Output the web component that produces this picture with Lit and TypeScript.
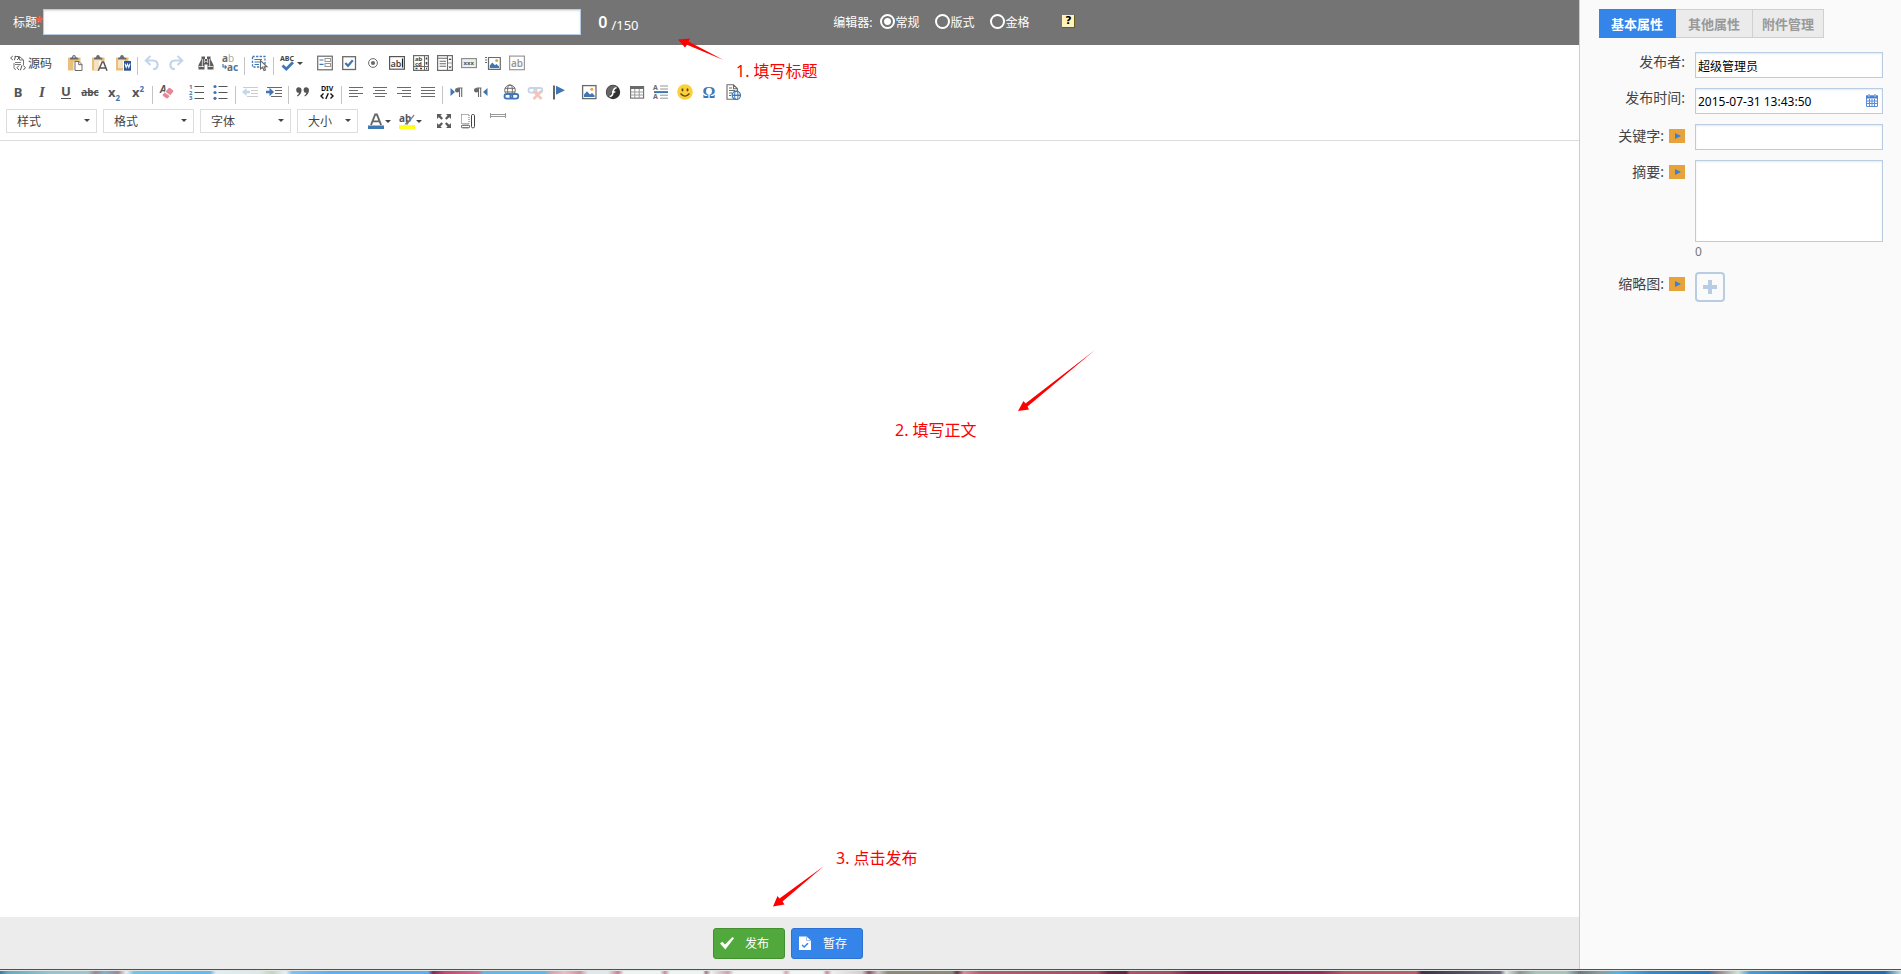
import { LitElement, html, svg, css, TemplateResult, SVGTemplateResult } from "lit";
import { customElement, state } from "lit/decorators.js";

const G = "#6a6a6a";
const B = "#3f77b5";

const icon = (body: SVGTemplateResult, w = 16, h = 16) =>
  html`<svg width=${w} height=${h} viewBox="0 0 ${w} ${h}" aria-hidden="true">${body}</svg>`;

const lines = (xs: [number, number][], c = G) =>
  svg`${xs.map(([a, b], i) => svg`<path d="M${a} ${3.5 + i * 3}H${b}" stroke=${c} fill="none"/>`)}`;

const clipboard = svg`
  <path d="M1 2.5H13.5V7H6.5V15.5H1Z" fill="#e9bf7c"/>
  <path d="M3 4.5V3L5 2.2Q5.3 0 7 0T9 2.2L11.3 3V4.5Z" fill=${G}/>
  <circle cx="7" cy="2" r=".8" fill="#fff"/>`;

const chain = (c: string) => svg`
  <rect x="1.5" y="10" width="8" height="4.6" rx="2.3" fill="none" stroke=${c} stroke-width="1.8"/>
  <rect x="7.3" y="10" width="8" height="4.6" rx="2.3" fill="none" stroke=${c} stroke-width="1.8"/>`;

const para = svg`<path d="M8.5 4H13.5M8.8 4.2V8M10.5 4V13M12.7 4V13" stroke=${G} stroke-width="1.1" fill="none"/>
  <circle cx="8.2" cy="6.2" r="2.2" fill=${G}/>`;

const ICONS: Record<string, TemplateResult> = {
  source: icon(svg`<path d="M4.5 1.5H9.5L13.5 5V10M9.5 1.5V5H13.5M5 7.5H11M5 9.5H11M4 8V12.5Q4 14.5 6 14.5" fill="none" stroke="#777"/>
    <path d="M2.8 1L.6 3L2.8 5M7 1L9 3L7 5M5.6 .8L4.4 5.2" fill="none" stroke="#555"/>
    <path d="M9 10.5L7 12.7L9 15M13.4 10.5L15.4 12.7L13.4 15M12 10.3L10.4 15.3" fill="none" stroke="#555"/>`),
  paste: icon(svg`${clipboard}<path d="M8 6.5H12L15 9.5V15.5H8Z" fill="#fff" stroke=${G}/><path d="M11.7 6.5V9.7H15" fill="none" stroke=${G}/>`),
  pasteText: icon(svg`<path d="M1 2.5H13.5V6H8V15.5H1Z" fill="#e9bf7c"/><path d="M3 4H10V15H3Z" fill="#fff" opacity=".55"/>
    <path d="M3 4.5V3L5 2.2Q5.3 0 7 0T9 2.2L11.3 3V4.5Z" fill=${G}/><path d="M7.3 15.8L11.2 7H12.6L16 15.8M9 13H14.5" fill="none" stroke="#555" stroke-width="1.5"/>`),
  pasteWord: icon(svg`<path d="M1 2.5H13.5V6H8V15.5H1Z" fill="#e9bf7c"/><path d="M3 4H10V13H3Z" fill="#fff" opacity=".55"/>
    <path d="M3 4.5V3L5 2.2Q5.3 0 7 0T9 2.2L11.3 3V4.5Z" fill=${G}/><rect x="9" y="6" width="7" height="9.7" fill="#2b579a"/>
    <path d="M10 8.7L11.2 12.5L12.5 9.3L13.8 12.5L15 8.7" fill="none" stroke="#fff" stroke-width="1.1"/>`),
  undo: icon(svg`<path d="M1.5 5.5H9Q13.6 5.8 13.6 10T9 14" fill="none" stroke="#c3d5ea" stroke-width="2.2"/><path d="M6.5 1L1.8 5.5L6.5 10" fill="none" stroke="#c3d5ea" stroke-width="2"/>`),
  redo: icon(svg`<path d="M14.5 5.5H7Q2.4 5.8 2.4 10T7 14" fill="none" stroke="#c3d5ea" stroke-width="2.2"/><path d="M9.5 1L14.2 5.5L9.5 10" fill="none" stroke="#c3d5ea" stroke-width="2"/>`),
  find: icon(svg`<path d="M3.5 1.5H7V4H9V1.5H12.5V4L15.5 10V14.5H9.5V9.5H6.5V14.5H.5V10L3.5 4Z" fill="#5c5c5c"/>
    <path d="M4.4 4V12M6.4 4V8M9.6 4V8M11.6 4V12M7.2 6.5H8.8M1 11.5H6M10 11.5H15" stroke="#fff" stroke-width=".7"/>`),
  replace: icon(svg`<text x="0" y="7" font-size="10" font-weight="700" fill=${G}>a<tspan font-weight="400" fill="#aaa">b</tspan></text>
    <text x="5" y="15.5" font-size="10" font-weight="700" fill=${G}>a<tspan fill=${B}>c</tspan></text>
    <path d="M1 9V12H3.8M2.8 10.3L4.4 12L2.8 13.7" fill="none" stroke=${B} stroke-width="1.2"/>`),
  selectAll: icon(svg`<rect x="1.5" y="1.5" width="12.5" height="10.5" fill="none" stroke=${B} stroke-width="1.3" stroke-dasharray="2.2 1.4"/>
    <path d="M3.5 4.5H11M3.5 7H9M3.5 9.5H8" stroke=${B}/><path d="M9.5 5.5V14L11.6 12.2L13 15.5L14.5 15L13.2 11.8H16Z" fill="#fff" stroke=${G} stroke-width="1.1"/>`),
  spell: icon(svg`<text x="0" y="5.6" font-size="7" font-weight="700" fill="#444">ABC</text><path d="M2.5 10.5L6.3 14L13 7.3" fill="none" stroke=${B} stroke-width="2.8"/>`),
  form: icon(svg`<rect x=".7" y="1.2" width="14.6" height="13.6" fill="#fff" stroke=${G} stroke-width="1.2"/><path d="M2.5 5H6.5M2.5 9.3H6.5" stroke=${B} stroke-width="1.2"/><rect x="8" y="3.5" width="5.5" height="3" fill="#fff" stroke="#999"/><rect x="8" y="8.5" width="5.5" height="3" fill="#fff" stroke="#999"/>`),
  checkbox: icon(svg`<rect x="1.7" y="1.7" width="12.8" height="12.8" fill="#fff" stroke=${G} stroke-width="1.3"/><path d="M4.3 8L7 10.8L11.8 5.3" fill="none" stroke=${B} stroke-width="2.2"/>`),
  radio: icon(svg`<circle cx="8" cy="8" r="4.4" fill="#fff" stroke=${G}/><circle cx="8" cy="8" r="2.1" fill=${G}/>`),
  textfield: icon(svg`<rect x=".6" y="1.6" width="14.8" height="12.6" fill="#fff" stroke="#555" stroke-width="1.2"/><text x="1.6" y="11.5" font-size="9" font-weight="600" fill="#444">ab</text><path d="M13.5 3.5V12.5" stroke="#222" stroke-width="1.2"/>`),
  textarea: icon(svg`<rect x=".6" y=".6" width="14.8" height="14.8" fill="#fff" stroke=${G} stroke-width="1.2"/><path d="M11.5 1V15M1 11.5H15" stroke=${G}/>
    <text x="2" y="5.7" font-size="6" font-weight="700" fill="#444">ab</text><text x="2" y="10.5" font-size="6" font-weight="700" fill="#444">cd</text>
    <path d="M13.5 2.5V4.5M13.5 7V9.5M2.5 13.5H4.5M7 13.5H9M13 13.5H14" stroke="#444" stroke-width="1.6"/>`),
  select: icon(svg`<rect x=".6" y=".6" width="14.8" height="14.8" fill="#fff" stroke=${G} stroke-width="1.2"/><path d="M10.5 1V15M1 3.2H10M2.5 6.2H9M2.5 8.7H9M2.5 11.2H9" stroke=${G} stroke-width="1.1"/>
    <path d="M11.5 5L13 3L14.5 5ZM11.5 11.5L13 13.5L14.5 11.5Z" fill="#444"/><path d="M11 8H15" stroke="#999"/>`),
  button: icon(svg`<rect x=".6" y="3.6" width="14.8" height="9" fill="#eee" stroke="#888" stroke-width="1.1"/><text x="2.5" y="10.2" font-size="6" font-weight="700" fill="#555">xxx</text>`),
  imageButton: icon(svg`<path d="M0 2.5H2M0 5H2M0 7.5H2M3.5 2.5H15.3V14.4H3.5Z" fill="#fff" stroke=${G} stroke-width="1.2"/><path d="M4.8 13V10.5L7.3 7.5L10 10.3L11.5 9L14 11.5V13Z" fill=${B}/><circle cx="11.7" cy="5.5" r="1.5" fill="#e7a33e"/>`),
  hidden: icon(svg`<rect x=".6" y="1.1" width="14.8" height="13.6" fill="#fff" stroke="#999" stroke-width="1.2"/><text x="2" y="11.7" font-size="10" fill="#999" font-weight="600">ab</text>`),
  removeFormat: icon(svg`<text x="1" y="8.5" font-size="10" font-weight="700" font-style="italic" fill="#555">A</text><path d="M9 3.8L14.5 7.6L8.3 15.2L2.6 11.3Z" fill="#fff"/><path d="M9.5 4.2Q10.3 3.4 11.2 4L14 6.2Q14.8 7 14.2 7.8L11.4 11.2L6.5 7.7Z" fill="#e58797"/><path d="M5.8 8.6L10.7 12L9 14Q8.3 14.8 7.4 14.3L4 12Q3.2 11.2 3.9 10.5Z" fill="#e58797"/>`),
  ol: icon(svg`<text x="0" y="5" font-size="6" font-weight="700" fill=${B}>1</text><text x="0" y="10.5" font-size="6" font-weight="700" fill=${B}>2</text><text x="0" y="16" font-size="6" font-weight="700" fill=${B}>3</text><path d="M5.5 2.5H15M5.5 8.5H15M5.5 14.5H15" stroke="#555" stroke-width="1.2"/>`),
  ul: icon(svg`<circle cx="2" cy="2.5" r="1.6" fill=${B}/><circle cx="2" cy="8.5" r="1.6" fill=${B}/><circle cx="2" cy="14.3" r="1.6" fill=${B}/><path d="M5.5 2.5H14.5M5.5 8.5H14.5M5.5 14.5H14.5" stroke="#555" stroke-width="1.2"/>`),
  outdent: icon(svg`<path d="M1 3.5H16M9 6.5H16M9 9.5H16M5 12.5H16" stroke="#ccc" stroke-width="1.1"/><path d="M0 8L4.5 4V6.8H8V9.2H4.5V12Z" fill="#c3d5ea"/>`),
  indent: icon(svg`<path d="M1 3.5H16M9 6.5H16M9 9.5H16M5 12.5H16" stroke=${G} stroke-width="1.1"/><path d="M8 8L3.5 3.8V6.8H0V9.2H3.5V12.2Z" fill=${B}/>`),
  quote: icon(svg`<path d="M6.6 5.8Q6.6 10.5 2.5 12.6L2 11.6Q3.8 10.4 4 8.7A2.7 2.7 0 1 1 6.6 5.8ZM14 5.8Q14 10.5 9.9 12.6L9.4 11.6Q11.2 10.4 11.4 8.7A2.7 2.7 0 1 1 14 5.8Z" fill="#555"/>`),
  div: icon(svg`<text x="2" y="7" font-size="7" font-weight="700" fill="#111">DIV</text><path d="M4.5 9.5L2 12L4.5 14.5M11.5 9.5L14 12L11.5 14.5M9.3 9.3L6.8 15" fill="none" stroke="#111" stroke-width="1.4"/>`),
  left: icon(lines([[1, 15], [1, 10], [1, 15], [1, 10]])),
  center: icon(lines([[1, 15], [3, 13], [1, 15], [3, 13]])),
  right: icon(lines([[1, 15], [6, 15], [1, 15], [6, 15]])),
  justify: icon(lines([[1, 15], [1, 15], [1, 15], [1, 15]])),
  ltr: icon(svg`<path d="M1.5 4L6 8L1.5 12Z" fill=${B}/>${para}`),
  rtl: icon(svg`<g transform="translate(-5 0)">${para}</g><path d="M14.5 4L10 8L14.5 12Z" fill=${B}/>`),
  link: icon(svg`<circle cx="7" cy="6.3" r="5.3" fill="#fff" stroke=${G}/><ellipse cx="7" cy="6.3" rx="2.4" ry="5.3" fill="none" stroke=${G}/><path d="M2 4.3H12M2 8H12" stroke=${G}/><rect y="9" width="16" height="7" fill="#fff"/>${chain(B)}`),
  unlink: icon(svg`<g transform="translate(0 -6)">${chain("#c3d5ea")}</g><path d="M6.5 7L14.5 15M14.5 7L6.5 15" stroke="#f3c5b9" stroke-width="2.6"/>`),
  anchor: icon(svg`<path d="M3 1.5V15.5" stroke="#555" stroke-width="1.8"/><path d="M5 1.8L14 6.3L5 10.8Z" fill=${B}/>`),
  image: icon(svg`<rect x="1.6" y="1.6" width="13.4" height="13" fill="#fff" stroke=${G} stroke-width="1.3"/><path d="M3 13V10.5L6 7.3L9 10.5L11 9L13.6 11.5V13Z" fill=${B}/><circle cx="10.8" cy="5.3" r="1.5" fill="#e7a33e"/>`),
  flash: icon(svg`<circle cx="8" cy="8" r="7.2" fill="#333"/><path d="M2.8 12.8A7.2 7.2 0 0 1 13 2.8Z" fill="#666"/><path d="M11.5 3.8Q8.5 4 8 8.3Q7.5 12.3 4.5 12.4M7 8H10.3" fill="none" stroke="#fff" stroke-width="1.6"/>`),
  table: icon(svg`<rect x="1.6" y="2.6" width="13" height="11.5" fill="#fff" stroke=${G} stroke-width="1.1"/><rect x="1" y="2" width="14" height="3" fill=${G}/><path d="M1.5 8H14.5M1.5 11H14.5M5.8 5V14M10.2 5V14" stroke="#999"/>`),
  hr: icon(svg`<text x="0" y="6" font-size="7" font-weight="700" fill=${G}>A</text><text x="0" y="15.3" font-size="7" font-weight="700" fill=${G}>A</text><path d="M7 2H15M7 5H15M7 11.2H15M7 14.2H15" stroke="#888" stroke-width=".9"/><path d="M1 8.1H15" stroke=${B} stroke-width="2"/>`),
  smiley: icon(svg`<circle cx="8" cy="8" r="7.8" fill="#fbd03b"/><ellipse cx="5.5" cy="5.8" rx="1" ry="1.6" fill="#5b4a1a"/><ellipse cx="10.5" cy="5.8" rx="1" ry="1.6" fill="#5b4a1a"/><path d="M3.5 9.5Q8 14.8 12.5 9.5" fill="none" stroke="#5b4a1a" stroke-width="1.3"/>`),
  omega: icon(svg`<text class="serif" x="8" y="14" font-size="16" font-weight="700" text-anchor="middle" fill=${B}>Ω</text>`),
  iframe: icon(svg`<path d="M2 .8H8.5L12.5 4.8V15.2H2ZM8.5 .8V4.8H12.5M4 4H7M4 6.5H10M4 9H7M4 11.5H6" fill="#fff" stroke=${G} stroke-width="1.1"/><circle cx="11.3" cy="11.3" r="4.2" fill="#fff" stroke=${B} stroke-width="1.2"/><ellipse cx="11.3" cy="11.3" rx="1.8" ry="4.2" fill="none" stroke=${B}/><path d="M7.2 11.3H15.4" stroke=${B} stroke-width="1.4"/>`),
  textColor: icon(svg`<path d="M3 12L7.2 1.5H8.9L13.1 12M4.6 8.4H11.6" fill="none" stroke="#666" stroke-width="1.9"/><rect y="12.5" width="16" height="3.5" fill=${B}/>`),
  bgColor: icon(svg`<text x="0" y="9" font-size="10" font-weight="700" fill="#555">ab</text><path d="M14.8 1.5L9 8.5L7.3 9L5.5 11.5H9L9.7 9.8L15.5 2.6Z" fill="#777"/><rect y="12" width="16" height="4" fill="#ffff1a"/>`),
  maximize: icon(svg`<path d="M1 1H6L4.5 2.6L7 5.3L5.5 6.8L2.7 4.3L1 6ZM15 1V6L13.3 4.3L10.5 6.8L9 5.3L11.5 2.6L10 1ZM1 15V10L2.7 11.7L5.5 9.2L7 10.7L4.5 13.4L6 15ZM15 15H10L11.5 13.4L9 10.7L10.5 9.2L13.3 11.7L15 10Z" fill="#5c5c5c"/>`),
  blocks: icon(svg`<rect x="1.5" y="1.5" width="7.5" height="9" fill="none" stroke="#666" stroke-dasharray="1 1"/><rect x="1.5" y="12.2" width="8" height="2.6" rx="1" fill="none" stroke="#444"/><rect x="11.5" y="1.5" width="3" height="13.3" rx="1.2" fill="none" stroke="#444"/>`),
  pageBreak: icon(svg`<path d="M.5 0V5M15.5 0V5M.5 1.5H15.5M.5 3.5H15.5" fill="none" stroke="#999"/>`),
};

type Group = { items: string[]; end?: "line" | "gap" };

const ROW1: Group[] = [
  { items: ["paste", "pasteText", "pasteWord"], end: "line" },
  { items: ["undo", "redo"], end: "gap" },
  { items: ["find", "replace"], end: "line" },
  { items: ["selectAll"], end: "line" },
  { items: ["spell"], end: "gap" },
  { items: ["form", "checkbox", "radio", "textfield", "textarea", "select", "button", "imageButton", "hidden"] },
];

const ROW2: Group[] = [
  { items: ["b", "i", "u", "s", "sub", "sup"], end: "line" },
  { items: ["removeFormat"], end: "gap" },
  { items: ["ol", "ul"], end: "line" },
  { items: ["outdent", "indent"], end: "line" },
  { items: ["quote", "div"], end: "line" },
  { items: ["left", "center", "right", "justify"], end: "line" },
  { items: ["ltr", "rtl"], end: "gap" },
  { items: ["link", "unlink", "anchor"], end: "gap" },
  { items: ["image", "flash", "table", "hr", "smiley", "omega", "iframe"] },
];

const ROW3: Group[] = [
  { items: ["textColor", "bgColor"], end: "gap" },
  { items: ["maximize", "blocks"], end: "gap" },
  { items: ["pageBreak"] },
];

const LETTERS: Record<string, TemplateResult> = {
  b: html`<span class="ch">B</span>`,
  i: html`<span class="ch it">I</span>`,
  u: html`<span class="ch un">U</span>`,
  s: html`<span class="ch st">abc</span>`,
  sub: html`<span class="ch">x<sub>2</sub></span>`,
  sup: html`<span class="ch">x<sup>2</sup></span>`,
};

const MENUS = new Set(["spell", "textColor", "bgColor"]);

@customElement("cms-toolbar")
class CmsToolbar extends LitElement {
  static styles = css`
    :host { display: flex; flex-direction: column; gap: 5px; padding: 6px 6px 7px; border-bottom: 1px solid #ddd; background: #fff;
      font-family: "Noto Sans", "Noto Sans CJK SC", sans-serif; font-size: 12px; color: #444; }
    .row { display: flex; height: 24px; align-items: center; }
    .group { display: flex; }
    button { display: flex; flex: none; align-items: center; justify-content: center; width: 24px; height: 24px; padding: 0;
      border: 0; background: none; color: inherit; font: inherit; }
    .source { gap: 2px; width: auto; margin-right: 5px; padding: 0 6px 0 4px; }
    .menu { width: 31px; }
    .menu::after { content: ""; border: 3px solid transparent; border-top-color: #444; border-bottom: 0; margin-left: 1px; }
    .low { align-items: flex-start; }
    .low svg { margin-top: 4px; }
    .line { width: 1px; height: 18px; margin: 0 2px; background: #c4c4c4; align-self: flex-end; }
    .gap { width: 6px; }
    .ch { font-weight: 700; font-size: 13px; line-height: 16px; color: #555; white-space: nowrap; }
    .it { font-family: "Liberation Serif", serif; font-style: italic; font-size: 15px; }
    .un { border-bottom: 1px solid #555; line-height: 13px; }
    .st { font-size: 10px; text-decoration: line-through; }
    sub, sup { font-size: 8px; line-height: 0; color: #3f77b5; }
    .combos { display: flex; gap: 6px; margin-right: 6px; }
    .combo { display: flex; align-items: center; border: 1px solid #ddd; height: 24px; box-sizing: border-box; width: 91px; position: relative; }
    .combo.small { width: 61px; }
    .combo::after { content: ""; position: absolute; right: 6px; top: 9px; border: 3px solid transparent; border-top-color: #444; border-bottom: 0; pointer-events: none; }
    select { appearance: none; width: 100%; height: 22px; border: 0; background: none; padding: 0 0 0 10px; font: inherit; color: #444; }
    .serif { font-family: "Liberation Serif", "DejaVu Serif", serif; }
    svg { display: block; flex: none; overflow: visible; }
  `;

  private groups(list: Group[]) {
    return list.map(
      (g) => html`<div class="group">
          ${g.items.map(
            (n) => html`<button type="button" aria-label=${n}
              class=${MENUS.has(n) ? "menu" : n === "pageBreak" ? "low" : ""}>${LETTERS[n] ?? ICONS[n]}</button>`
          )}
        </div>
        ${g.end ? html`<span class=${g.end}></span>` : ""}`
    );
  }

  render() {
    return html`
      <div class="row"><button type="button" class="source">${ICONS.source}源码</button>${this.groups(ROW1)}</div>
      <div class="row">${this.groups(ROW2)}</div>
      <div class="row">
        <div class="combos">
          ${["样式", "格式", "字体", "大小"].map(
            (t, i) => html`<div class="combo ${i === 3 ? "small" : ""}"><select aria-label=${t}><option>${t}</option></select></div>`
          )}
        </div>
        ${this.groups(ROW3)}
      </div>`;
  }
}

@customElement("cms-properties")
class CmsProperties extends LitElement {
  static styles = css`
    :host { display: block; box-sizing: border-box; padding: 9px 18px 0 19px; background: #fafafa; border-left: 1px solid #ccc;
      font-family: "Noto Sans", "Noto Sans CJK SC", sans-serif; font-size: 14px; color: #444; }
    .tabs { display: flex; margin-bottom: 14px; }
    .tab { height: 29px; padding: 0 12px; border: 1px solid #d0d0d0; border-left: 0; background: #ebebeb; color: #999;
      font: 700 13px/24px "Noto Sans CJK SC", sans-serif; }
    .tab:last-child { padding: 0 9px; }
    .tab.on { background: #3584e9; border-color: #3584e9; color: #fff; }
    .row { display: grid; grid-template-columns: 86px minmax(0, 1fr); column-gap: 10px; margin-bottom: 10px; align-items: start; }
    .label { display: flex; justify-content: flex-end; align-items: center; gap: 5px; height: 20px; line-height: 20px; white-space: nowrap; }
    .label.flagged { height: 24px; }
    .flag { display: block; width: 16px; height: 14px; padding: 0; border: 0; background: #e6a33b; }
    .flag svg, .cal svg, .add svg { display: block; }
    .field { display: flex; align-items: center; box-sizing: border-box; height: 26px; border: 1px solid #b8cce4; background: #fff; box-shadow: inset 0 1px 2px #e8e8e8; }
    input { flex: 1; min-width: 0; height: 24px; box-sizing: border-box; border: 0; padding: 1px 2px 0; background: none; font: 12px/20px "Noto Sans", "Noto Sans CJK SC", sans-serif; color: #000; }
    .cal { border: 0; background: none; padding: 0 4px 1px; }
    textarea { display: block; width: 100%; height: 82px; box-sizing: border-box; border: 1px solid #b8cce4; background: #fff; resize: none; box-shadow: inset 0 1px 2px #e8e8e8; }
    .count { font-size: 12px; line-height: 20px; color: #777; }
    .add { width: 30px; height: 30px; padding: 6px; border: 2px solid #b8cce4; border-radius: 4px; background: #fafafa; }
  `;

  @state() private tab = 0;
  @state() private summary = "";

  private label(text: string, id: string, flagged = false) {
    return html`<div class="label ${flagged ? "flagged" : ""}"><label for=${id}>${text}:</label>${flagged
      ? html`<button type="button" class="flag" aria-label="同步">${icon(svg`<path d="M6 4L12 7L6 10Z" fill="#3d7fd0"/>`, 16, 14)}</button>`
      : ""}</div>`;
  }

  render() {
    return html`
      <div class="tabs" role="tablist">
        ${["基本属性", "其他属性", "附件管理"].map(
          (t, i) => html`<button type="button" role="tab" class="tab ${i === this.tab ? "on" : ""}" @click=${() => (this.tab = i)}>${t}</button>`
        )}
      </div>
      <div class="row">${this.label("发布者", "author")}<div class="field"><input id="author" .value=${"超级管理员"}></div></div>
      <div class="row">${this.label("发布时间", "time")}<div class="field"><input id="time" .value=${"2015-07-31 13:43:50"}>
        <button type="button" class="cal" aria-label="日历">${icon(svg`
          <path d="M.5 2H11.5V12.5H.5Z" fill="#fff" stroke="#5b8dd6"/><path d="M0 1.5H12V4.5H0Z" fill="#4a80d0"/>
          <path d="M3 0V3M9 0V3" stroke="#8aaee3" stroke-width="1.5"/><path d="M1 7H11M1 9.5H11M3.5 5V12M6 5V12M8.5 5V12" stroke="#5b8dd6"/>`, 12, 13)}</button></div></div>
      <div class="row">${this.label("关键字", "keys", true)}<div class="field"><input id="keys"></div></div>
      <div class="row">${this.label("摘要", "summary", true)}<div>
        <textarea id="summary" .value=${this.summary} @input=${(e: Event) => (this.summary = (e.target as HTMLTextAreaElement).value)}></textarea>
        <div class="count">${this.summary.length}</div></div></div>
      <div class="row">${this.label("缩略图", "thumb", true)}
        <button type="button" id="thumb" class="add">${icon(svg`<path d="M7 0V14M0 7H14" stroke="#b8cce4" stroke-width="4"/>`, 14, 14)}</button></div>`;
  }
}

const STRIP: [number, string][] = [
  [0, "#44779c"], [8, "#6ea5bf"], [50, "#93c4d0"], [88, "#a0c4d0"], [95, "#9d8793"], [105, "#7fb4cf"], [118, "#9d8793"], [126, "#f0eef4"],
  [134, "#7cc0e3"], [210, "#66b9ea"], [216, "#dfeff5"], [260, "#dde8e4"], [272, "#c6d3c2"], [286, "#e8f0f4"], [292, "#87bfe8"], [330, "#62adee"],
  [428, "#62adee"], [433, "#7c2d55"], [445, "#c14a74"], [478, "#cf6c90"], [484, "#6db6dc"], [544, "#64b6e6"], [552, "#d9a3b4"], [565, "#e8c0c8"],
  [580, "#d58fa0"], [588, "#dfe8ec"], [608, "#e0e8ea"], [618, "#c97f94"], [624, "#eef3f4"], [660, "#eef3f4"], [665, "#c98a9c"], [670, "#eef3f4"],
  [703, "#eef3f4"], [706, "#a87488"], [711, "#eef3f4"], [728, "#d0a0ae"], [734, "#f2f5f5"], [782, "#f2f5f5"], [786, "#d7a2ae"], [791, "#f2f5f5"],
  [823, "#f2f5f5"], [827, "#c98a98"], [832, "#eef0f0"], [862, "#d8cdd0"], [869, "#8a5566"], [878, "#d0c4c4"], [888, "#8f8a7c"], [952, "#92877c"],
  [957, "#5f3a4a"], [964, "#d58f9c"], [980, "#ad6070"], [1098, "#a34f66"], [1108, "#6b2a44"], [1126, "#5a2740"], [1130, "#a95469"],
  [1170, "#9a5066"], [1190, "#7c2650"], [1320, "#8e3258"], [1345, "#b05a68"], [1416, "#b3606c"], [1422, "#3f3348"], [1500, "#68697a"],
  [1506, "#dce8e2"], [1520, "#8d9494"], [1536, "#a9c4bd"], [1566, "#a9c4bd"], [1580, "#6d7a80"], [1600, "#8d9ca0"], [1618, "#55b4de"],
  [1650, "#3f86c4"], [1708, "#2c74b2"], [1716, "#8a7a86"], [1738, "#cfe3d6"], [1750, "#4f9acb"], [1830, "#2a6aa4"], [1885, "#2b6aa6"], [1901, "#bfe3e4"],
];

const stripBackground = `linear-gradient(90deg, ${STRIP.map(([x, c]) => `${c} ${((x / 1901) * 100).toFixed(2)}%`).join(", ")})`;

@customElement("app-root")
class AppRoot extends LitElement {
  static styles = css`
    :host { display: flex; flex-direction: column; height: 100vh; font-family: "Noto Sans", "Noto Sans CJK SC", sans-serif; font-size: 12px; }
    .page { flex: 1; min-height: 0; display: grid; grid-template-columns: minmax(0, 1fr) 322px; }
    .main { position: relative; display: flex; flex-direction: column; min-width: 0; background: #fff; }
    .head { display: flex; align-items: center; height: 45px; box-sizing: border-box; padding: 0 13px 2px; background: #747474; color: #fff; }
    .star { flex: none; color: #f4623a; width: 8px; margin-left: -5px; font-weight: 700; font-size: 14px; line-height: 12px; }
    .title { flex: 0 1 538px; min-width: 0; height: 26px; box-sizing: border-box; border: 1px solid #b8cce4; background: #fff; box-shadow: inset 0 1px 2px #e0e0e0; }
    .counter { display: flex; align-items: center; gap: 4px; margin-left: 17px; width: 235px; line-height: 20px; }
    .used { font-size: 16px; font-weight: 600; }
    .limit { padding-top: 6px; font-size: 13px; }
    .mode { display: flex; align-items: center; margin-right: 16px; }
    .caption { margin-right: 8px; }
    .mode input { appearance: none; width: 15px; height: 15px; margin: 0; border: 2px solid #fff; border-radius: 50%; }
    .mode input:checked { background: radial-gradient(circle, #fff 3px, transparent 4px); }
    .help { width: 13px; height: 13px; margin-left: 17px; padding: 0; border: 0; border-right: 1px solid #6b5a1e; border-bottom: 1px solid #6b5a1e; background: #fdf3bd; color: #000; font: 700 11px/12px "DejaVu Sans", sans-serif; }
    .editor { flex: 1; }
    .foot { display: flex; justify-content: center; align-items: center; gap: 6px; height: 52px; padding-right: 3px; background: #ececec; }
    .btn { display: flex; align-items: center; gap: 10px; width: 72px; height: 31px; padding: 0 0 0 5px; border: 1px solid; border-radius: 3px; color: #fff; font: inherit; }
    .publish { background: #51a83c; border-color: #44902f; }
    .save { background: #3584e9; border-color: #2b72d4; }
    .note { position: absolute; color: #f00; font-size: 16px; line-height: 24px; white-space: nowrap; }
    .arrow { position: absolute; display: block; }
    .note-title { left: 736px; top: 59px; }
    .note-body { left: 895px; top: 418px; }
    .note-publish { left: 836px; top: 846px; }
    .arrow-title { left: 678px; top: 38px; }
    .arrow-body { left: 1018px; top: 350px; }
    .arrow-publish { left: 773px; top: 866px; }
    .strip { height: 3px; border-top: 1px solid #2f5f62; box-shadow: inset 0 1px #dfe6e4; padding-top: 1px; }
  `;

  @state() private used = 0;

  render() {
    return html`
      <div class="page">
        <main class="main">
          <header class="head">
            <label for="title">标题:</label><span class="star">*</span>
            <input id="title" class="title" maxlength="150" @input=${(e: Event) => (this.used = (e.target as HTMLInputElement).value.length)}>
            <div class="counter"><span class="used">${this.used}</span><span class="limit">/150</span></div>
            <span class="caption">编辑器:</span>
            ${["常规", "版式", "金格"].map(
              (t, i) => html`<label class="mode"><input type="radio" name="mode" ?checked=${i === 0}>${t}</label>`
            )}
            <button type="button" class="help">?</button>
          </header>
          <cms-toolbar></cms-toolbar>
          <div class="editor" role="textbox" contenteditable="true" aria-label="正文"></div>
          <footer class="foot">
            <button type="button" class="btn publish">${icon(svg`<path d="M1 8.5L3.3 6.7L6 9.5L13.5 2L15 3.2L6.3 14.5Z" fill="#fff"/>`)}发布</button>
            <button type="button" class="btn save">${icon(svg`<path d="M2 1.5H9.5L14 5.5V15H2Z" fill="#fff"/><path d="M9.5 1.5V5.5H14" fill="none" stroke="#9cc1f2"/><path d="M5 10L7.2 12L11 8.3" fill="none" stroke="#3584e9" stroke-width="1.5"/>`)}暂存</button>
          </footer>
          <span class="note note-title">1. 填写标题</span>
          <span class="note note-body">2. 填写正文</span>
          <span class="note note-publish">3. 点击发布</span>
          <svg class="arrow arrow-title" width="46" height="24"><path d="M0 1.5L12 .5L10.5 3.5L45.5 22L9 6.8L7 9.5Z" fill="#f00"/></svg>
          <svg class="arrow arrow-body" width="78" height="62"><path d="M0 61L5.5 51L7.5 53.5L77 0L9.5 56.5L11 59.5Z" fill="#f00"/></svg>
          <svg class="arrow arrow-publish" width="52" height="42"><path d="M0 40.5L4.5 30L6.5 32.5L51 0L9.5 35.5L11.5 38.5Z" fill="#f00"/></svg>
        </main>
        <cms-properties></cms-properties>
      </div>
      <div class="strip" style="background: ${stripBackground}"></div>`;
  }
}
